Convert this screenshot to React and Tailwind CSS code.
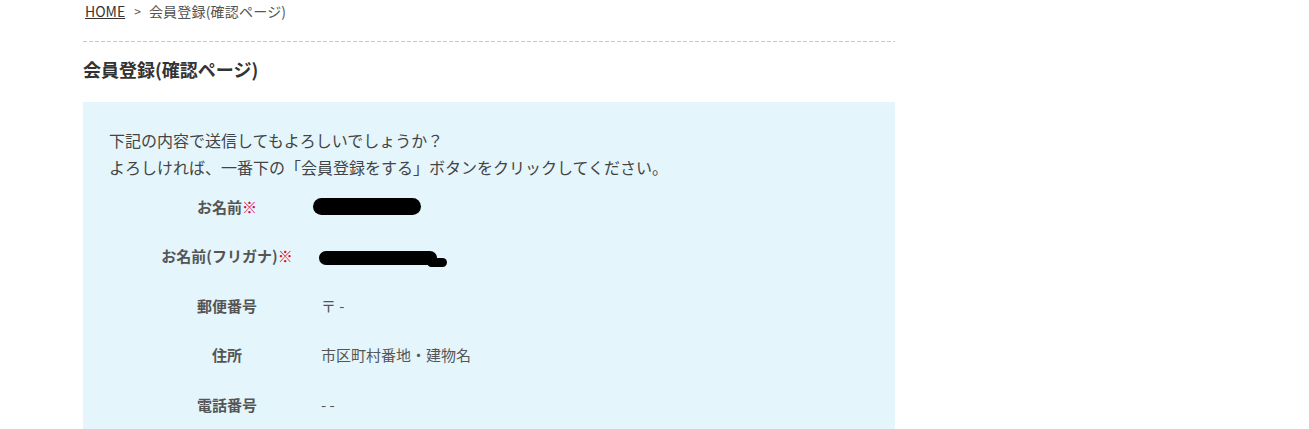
import React from 'react';

const rows = [
  { label: 'お名前', required: true, blob: 'name' },
  { label: 'お名前(フリガナ)', required: true, blob: 'kana' },
  { label: '郵便番号', value: '〒 -' },
  { label: '住所', value: '市区町村番地・建物名' },
  { label: '電話番号', value: '- -' },
];

const Redacted = ({ kind }) => {
  if (kind === 'name') {
    return <span className="block -ml-[8px] h-[17px] w-[108px] rounded-full bg-black" />;
  }
  return (
    <span className="relative block -ml-[2px] mt-[6px] h-[16px] w-[128px]">
      <span className="absolute left-0 top-0 h-[14px] w-[118px] rounded-full bg-black" />
      <span className="absolute right-0 top-[7px] h-[9px] w-[20px] rounded-full bg-black" />
    </span>
  );
};

export default function App() {
  return (
    <div className="min-h-screen bg-white font-['Noto_Sans_CJK_JP','Noto_Sans',sans-serif] text-[#444]">
      <div className="ml-[83px] w-[812px]">
        {/* breadcrumb */}
        <div className="flex items-center pl-[2px] pt-[1px] text-[14px] leading-[20px] text-[#555]">
          <a href="#" className="text-[#333] underline">HOME</a>
          <span className="ml-[9px] mr-[8px] text-[12px]">&gt;</span>
          <span className="tracking-[0.2px]">会員登録(確認ページ)</span>
        </div>

        <div className="mt-[20px] h-px bg-[repeating-linear-gradient(to_right,#c8c8c8_0_4px,transparent_4px_6px)]" />

        <h1 className="mt-[14px] text-[18px] font-bold leading-[26px] text-[#333]">会員登録(確認ページ)</h1>

        <div className="mt-[20px] bg-[#e4f5fc] px-[26px] pt-[25px] pb-[20px]">
          <p className="text-[16px] leading-[27px] text-[#444]">
            下記の内容で送信してもよろしいでしょうか？<br />
            よろしければ、一番下の「会員登録をする」ボタンをクリックしてください。
          </p>

          <div className="mt-[1px]">
            {rows.map((r) => (
              <div key={r.label} className="flex h-[49.5px] items-center">
                <div className="ml-[24px] w-[188px] text-center text-[15px] font-bold text-[#555]">
                  {r.label}
                  {r.required && <span className="font-normal text-[#e8003a]">※</span>}
                </div>
                <div className="text-[15px] text-[#555]">
                  {r.blob ? <Redacted kind={r.blob} /> : r.value}
                </div>
              </div>
            ))}
          </div>
        </div>
      </div>
    </div>
  );
}
